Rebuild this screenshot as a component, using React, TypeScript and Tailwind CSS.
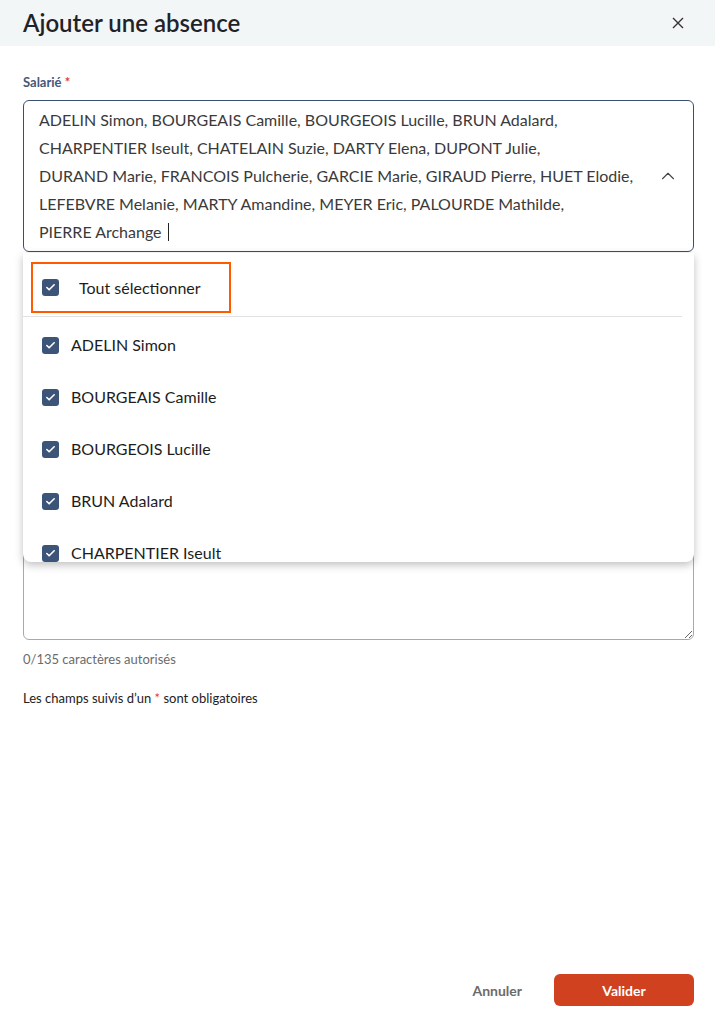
import { Check, ChevronUp } from 'lucide-react';

const selectedLines = [
  ['ADELIN Simon', 'BOURGEAIS Camille', 'BOURGEOIS Lucille', 'BRUN Adalard'],
  ['CHARPENTIER Iseult', 'CHATELAIN Suzie', 'DARTY Elena', 'DUPONT Julie'],
  ['DURAND Marie', 'FRANCOIS Pulcherie', 'GARCIE Marie', 'GIRAUD Pierre', 'HUET Elodie'],
  ['LEFEBVRE Melanie', 'MARTY Amandine', 'MEYER Eric', 'PALOURDE Mathilde'],
  ['PIERRE Archange'],
];

const employees = [
  'ADELIN Simon',
  'BOURGEAIS Camille',
  'BOURGEOIS Lucille',
  'BRUN Adalard',
  'CHARPENTIER Iseult',
  'CHATELAIN Suzie',
  'DARTY Elena',
];

function CheckBox() {
  return (
    <span className="flex h-[17px] w-[17px] flex-none items-center justify-center rounded-[3px] bg-[#3d5479]">
      <Check className="h-[11px] w-[11px] text-white" strokeWidth={3.5} />
    </span>
  );
}

function App() {
  return (
    <div className="flex h-[1029px] flex-col bg-white font-['Lato',sans-serif] text-[#1d1d1d]">
      {/* header */}
      <div className="flex h-[46px] flex-none items-center justify-between bg-[#f3f6f7] pl-[23px] pr-[25px]">
        <h1 className="text-[24px] font-semibold leading-none text-[#1f2329]">Ajouter une absence</h1>
        <button className="flex h-6 w-6 items-center justify-center text-[#333]">
          <svg width="12" height="12" viewBox="0 0 12 12" fill="none" stroke="currentColor" strokeWidth="1.4">
            <path d="M1 1 L11 11 M11 1 L1 11" />
          </svg>
        </button>
      </div>

      {/* form */}
      <div className="relative flex flex-col pl-[23px] pr-[21px] pt-[27px]">
        <label className="text-[13px] font-bold leading-[18px] text-[#44597a]">
          Salarié <span className="text-[#e53935]">*</span>
        </label>

        <div className="mt-[9px] flex items-center rounded-[6px] border border-[#3b4f6e] py-[5px] pl-[15px] pr-[14px]">
          <div className="flex-1 text-[16px] leading-[28px] text-[#3a3a3a]">
            {selectedLines.map((line, i) => (
              <div key={i} className="flex items-center whitespace-nowrap">
                {line.map((name, j) => (
                  <span key={name}>
                    {name}
                    {i < selectedLines.length - 1 ? ',' : ''}
                    {j < line.length - 1 ? '\u00a0' : ''}
                  </span>
                ))}
                {i === selectedLines.length - 1 && (
                  <span className="ml-[6px] inline-block h-[18px] border-l border-[#222]" />
                )}
              </div>
            ))}
          </div>
          <ChevronUp className="h-[22px] w-[22px] text-[#444]" strokeWidth={1.2} />
        </div>

        {/* fields hidden below the open list */}
        <div className="h-[289px]" />
        <textarea className="h-[99px] resize-y rounded-[6px] border border-[#a9a9a9] outline-none" />
        <p className="mt-[11px] text-[13px] leading-[16px] text-[#6b6b6b]">0/135 caractères autorisés</p>
        <p className="mt-[23px] text-[13px] leading-[16px] text-[#222]">
          Les champs suivis d’un <span className="text-[#e53935]">*</span> sont obligatoires
        </p>

        {/* open dropdown */}
        <div className="absolute left-[23px] right-[21px] top-[207px] h-[309px] overflow-hidden rounded-b-[8px] bg-white shadow-[0_3px_8px_rgba(0,0,0,0.25)]">
          <div className="pl-2 pt-[9px]">
            <div className="flex h-[51px] w-[200px] items-center gap-5 border-2 border-[#ff5a00] pl-[9px]">
              <CheckBox />
              <span className="text-[16px]">Tout sélectionner</span>
            </div>
          </div>
          <div className="mr-3 mt-[3px] border-t border-[#e2e2e2]" />
          <div className="mt-[2px]">
            {employees.map((name) => (
              <div key={name} className="flex h-[52px] items-center gap-3 pl-[19px]">
                <CheckBox />
                <span className="text-[16px]">{name}</span>
              </div>
            ))}
          </div>
        </div>
      </div>

      {/* footer */}
      <div className="mt-auto flex items-center justify-end gap-4 pb-[23px] pr-[21px]">
        <button className="px-4 text-[14px] font-bold text-[#6b6b6b]">Annuler</button>
        <button className="h-[32px] w-[140px] rounded-[6px] bg-[#d0421f] text-[14px] font-bold text-white">
          Valider
        </button>
      </div>
    </div>
  );
}

export default App;
